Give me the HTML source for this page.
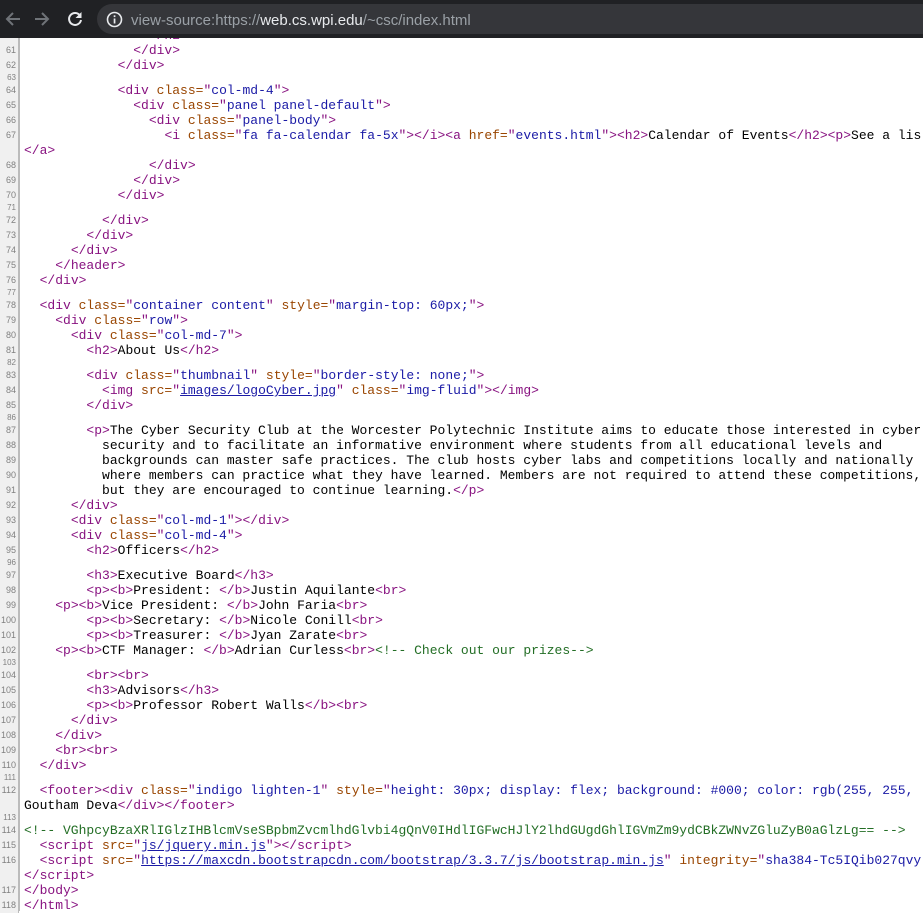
<!DOCTYPE html>
<html><head><meta charset="utf-8">
<style>
html,body{margin:0;padding:0;background:#fff;width:923px;height:911px;overflow:hidden;}
#bar{position:absolute;left:0;top:0;width:923px;height:38px;background:#202124;z-index:5;}
#pill{position:absolute;left:97px;top:4px;width:840px;height:30px;border-radius:15px;background:#35363a;}
#url{position:absolute;left:131px;top:12px;font:15px "Liberation Sans",sans-serif;color:#9aa0a6;white-space:pre;}
#url b{font-weight:normal;color:#e8eaed;}
#code{position:absolute;left:0;top:28px;width:923px;}
.r{display:flex;min-height:15px;}
.e{height:10px;min-height:10px;}
.n{flex:0 0 19px;width:19px;background:#f0f0f0;border-right:1px solid #bbb;font:9px "Liberation Sans",sans-serif;color:#808080;text-align:right;box-sizing:border-box;padding-right:2px;line-height:15px;}
.e .n{line-height:10px;font-size:8px;}
.x{padding-left:5px;font:13px/15px "Liberation Mono",monospace;white-space:pre;color:#000;overflow:hidden;}
.t{color:#881280}.a{color:#994500}.v{color:#1a1aa6}.c{color:#236e25}
.u{color:#1a1aa6;text-decoration:underline}
.fill{position:absolute;left:0;top:0;width:19px;height:911px;background:#f0f0f0;border-right:1px solid #bbb;}
</style></head><body>
<div class="fill"></div>
<div id="bar">
<svg style="position:absolute;left:4px;top:10px" width="18" height="18" viewBox="0 0 18 18"><path d="M16 9H3M9 3L3 9l6 6" stroke="#6f7378" stroke-width="2" fill="none"/></svg>
<svg style="position:absolute;left:33px;top:10px" width="18" height="18" viewBox="0 0 18 18"><path d="M2 9h13M9 3l6 6-6 6" stroke="#6f7378" stroke-width="2" fill="none"/></svg>
<svg style="position:absolute;left:66px;top:10px" width="18" height="18" viewBox="0 0 18 18"><path d="M14 5.5A6 6 0 1 0 15 10" stroke="#e8eaed" stroke-width="2" fill="none"/><path d="M15.5 2v6h-6z" fill="#e8eaed"/></svg>
<div id="pill"></div>
<svg style="position:absolute;left:106px;top:11px" width="17" height="17" viewBox="0 0 17 17"><circle cx="8.5" cy="8.5" r="7" stroke="#e8eaed" stroke-width="1.6" fill="none"/><rect x="7.7" y="7.5" width="1.7" height="5" fill="#e8eaed"/><rect x="7.7" y="4.3" width="1.7" height="1.8" fill="#e8eaed"/></svg>
<div id="url">view-source:https://<b>web.cs.wpi.edu</b>/~csc/index.html</div>
</div>
<div id="code">
<div class="r"><span class="n">60</span><span class="x">                <span class="t">&lt;/h2&gt;</span></span></div>
<div class="r"><span class="n">61</span><span class="x">              <span class="t">&lt;/div&gt;</span></span></div>
<div class="r"><span class="n">62</span><span class="x">            <span class="t">&lt;/div&gt;</span></span></div>
<div class="r e"><span class="n">63</span><span class="x"></span></div>
<div class="r"><span class="n">64</span><span class="x">            <span class="t">&lt;div <span class="a">class=</span>"<span class="v">col-md-4</span>"&gt;</span></span></div>
<div class="r"><span class="n">65</span><span class="x">              <span class="t">&lt;div <span class="a">class=</span>"<span class="v">panel panel-default</span>"&gt;</span></span></div>
<div class="r"><span class="n">66</span><span class="x">                <span class="t">&lt;div <span class="a">class=</span>"<span class="v">panel-body</span>"&gt;</span></span></div>
<div class="r"><span class="n">67</span><span class="x">                  <span class="t">&lt;i <span class="a">class=</span>"<span class="v">fa fa-calendar fa-5x</span>"&gt;&lt;/i&gt;&lt;a <span class="a">href=</span>"<span class="v">events.html</span>"&gt;&lt;h2&gt;</span>Calendar of Events<span class="t">&lt;/h2&gt;&lt;p&gt;</span>See a lis</span></div>
<div class="r"><span class="n"></span><span class="x"><span class="t">&lt;/a&gt;</span></span></div>
<div class="r"><span class="n">68</span><span class="x">                <span class="t">&lt;/div&gt;</span></span></div>
<div class="r"><span class="n">69</span><span class="x">              <span class="t">&lt;/div&gt;</span></span></div>
<div class="r"><span class="n">70</span><span class="x">            <span class="t">&lt;/div&gt;</span></span></div>
<div class="r e"><span class="n">71</span><span class="x"></span></div>
<div class="r"><span class="n">72</span><span class="x">          <span class="t">&lt;/div&gt;</span></span></div>
<div class="r"><span class="n">73</span><span class="x">        <span class="t">&lt;/div&gt;</span></span></div>
<div class="r"><span class="n">74</span><span class="x">      <span class="t">&lt;/div&gt;</span></span></div>
<div class="r"><span class="n">75</span><span class="x">    <span class="t">&lt;/header&gt;</span></span></div>
<div class="r"><span class="n">76</span><span class="x">  <span class="t">&lt;/div&gt;</span></span></div>
<div class="r e"><span class="n">77</span><span class="x"></span></div>
<div class="r"><span class="n">78</span><span class="x">  <span class="t">&lt;div <span class="a">class=</span>"<span class="v">container content</span>" <span class="a">style=</span>"<span class="v">margin-top: 60px;</span>"&gt;</span></span></div>
<div class="r"><span class="n">79</span><span class="x">    <span class="t">&lt;div <span class="a">class=</span>"<span class="v">row</span>"&gt;</span></span></div>
<div class="r"><span class="n">80</span><span class="x">      <span class="t">&lt;div <span class="a">class=</span>"<span class="v">col-md-7</span>"&gt;</span></span></div>
<div class="r"><span class="n">81</span><span class="x">        <span class="t">&lt;h2&gt;</span>About Us<span class="t">&lt;/h2&gt;</span></span></div>
<div class="r e"><span class="n">82</span><span class="x"></span></div>
<div class="r"><span class="n">83</span><span class="x">        <span class="t">&lt;div <span class="a">class=</span>"<span class="v">thumbnail</span>" <span class="a">style=</span>"<span class="v">border-style: none;</span>"&gt;</span></span></div>
<div class="r"><span class="n">84</span><span class="x">          <span class="t">&lt;img <span class="a">src=</span>"<span class="u">images/logoCyber.jpg</span>" <span class="a">class=</span>"<span class="v">img-fluid</span>"&gt;&lt;/img&gt;</span></span></div>
<div class="r"><span class="n">85</span><span class="x">        <span class="t">&lt;/div&gt;</span></span></div>
<div class="r e"><span class="n">86</span><span class="x"></span></div>
<div class="r"><span class="n">87</span><span class="x">        <span class="t">&lt;p&gt;</span>The Cyber Security Club at the Worcester Polytechnic Institute aims to educate those interested in cyber</span></div>
<div class="r"><span class="n">88</span><span class="x">          security and to facilitate an informative environment where students from all educational levels and</span></div>
<div class="r"><span class="n">89</span><span class="x">          backgrounds can master safe practices. The club hosts cyber labs and competitions locally and nationally</span></div>
<div class="r"><span class="n">90</span><span class="x">          where members can practice what they have learned. Members are not required to attend these competitions,</span></div>
<div class="r"><span class="n">91</span><span class="x">          but they are encouraged to continue learning.<span class="t">&lt;/p&gt;</span></span></div>
<div class="r"><span class="n">92</span><span class="x">      <span class="t">&lt;/div&gt;</span></span></div>
<div class="r"><span class="n">93</span><span class="x">      <span class="t">&lt;div <span class="a">class=</span>"<span class="v">col-md-1</span>"&gt;&lt;/div&gt;</span></span></div>
<div class="r"><span class="n">94</span><span class="x">      <span class="t">&lt;div <span class="a">class=</span>"<span class="v">col-md-4</span>"&gt;</span></span></div>
<div class="r"><span class="n">95</span><span class="x">        <span class="t">&lt;h2&gt;</span>Officers<span class="t">&lt;/h2&gt;</span></span></div>
<div class="r e"><span class="n">96</span><span class="x"></span></div>
<div class="r"><span class="n">97</span><span class="x">        <span class="t">&lt;h3&gt;</span>Executive Board<span class="t">&lt;/h3&gt;</span></span></div>
<div class="r"><span class="n">98</span><span class="x">        <span class="t">&lt;p&gt;&lt;b&gt;</span>President: <span class="t">&lt;/b&gt;</span>Justin Aquilante<span class="t">&lt;br&gt;</span></span></div>
<div class="r"><span class="n">99</span><span class="x">    <span class="t">&lt;p&gt;&lt;b&gt;</span>Vice President: <span class="t">&lt;/b&gt;</span>John Faria<span class="t">&lt;br&gt;</span></span></div>
<div class="r"><span class="n">100</span><span class="x">        <span class="t">&lt;p&gt;&lt;b&gt;</span>Secretary: <span class="t">&lt;/b&gt;</span>Nicole Conill<span class="t">&lt;br&gt;</span></span></div>
<div class="r"><span class="n">101</span><span class="x">        <span class="t">&lt;p&gt;&lt;b&gt;</span>Treasurer: <span class="t">&lt;/b&gt;</span>Jyan Zarate<span class="t">&lt;br&gt;</span></span></div>
<div class="r"><span class="n">102</span><span class="x">    <span class="t">&lt;p&gt;&lt;b&gt;</span>CTF Manager: <span class="t">&lt;/b&gt;</span>Adrian Curless<span class="t">&lt;br&gt;</span><span class="c">&lt;!-- Check out our prizes--&gt;</span></span></div>
<div class="r e"><span class="n">103</span><span class="x"></span></div>
<div class="r"><span class="n">104</span><span class="x">        <span class="t">&lt;br&gt;&lt;br&gt;</span></span></div>
<div class="r"><span class="n">105</span><span class="x">        <span class="t">&lt;h3&gt;</span>Advisors<span class="t">&lt;/h3&gt;</span></span></div>
<div class="r"><span class="n">106</span><span class="x">        <span class="t">&lt;p&gt;&lt;b&gt;</span>Professor Robert Walls<span class="t">&lt;/b&gt;&lt;br&gt;</span></span></div>
<div class="r"><span class="n">107</span><span class="x">      <span class="t">&lt;/div&gt;</span></span></div>
<div class="r"><span class="n">108</span><span class="x">    <span class="t">&lt;/div&gt;</span></span></div>
<div class="r"><span class="n">109</span><span class="x">    <span class="t">&lt;br&gt;&lt;br&gt;</span></span></div>
<div class="r"><span class="n">110</span><span class="x">  <span class="t">&lt;/div&gt;</span></span></div>
<div class="r e"><span class="n">111</span><span class="x"></span></div>
<div class="r"><span class="n">112</span><span class="x">  <span class="t">&lt;footer&gt;&lt;div <span class="a">class=</span>"<span class="v">indigo lighten-1</span>" <span class="a">style=</span>"<span class="v">height: 30px; display: flex; background: #000; color: rgb(255, 255,</span></span></span></div>
<div class="r"><span class="n"></span><span class="x">Goutham Deva<span class="t">&lt;/div&gt;&lt;/footer&gt;</span></span></div>
<div class="r e"><span class="n">113</span><span class="x"></span></div>
<div class="r"><span class="n">114</span><span class="x"><span class="c">&lt;!-- VGhpcyBzaXRlIGlzIHBlcmVseSBpbmZvcmlhdGlvbi4gQnV0IHdlIGFwcHJlY2lhdGUgdGhlIGVmZm9ydCBkZWNvZGluZyB0aGlzLg== --&gt;</span></span></div>
<div class="r"><span class="n">115</span><span class="x">  <span class="t">&lt;script <span class="a">src=</span>"<span class="u">js/jquery.min.js</span>"&gt;&lt;/script&gt;</span></span></div>
<div class="r"><span class="n">116</span><span class="x">  <span class="t">&lt;script <span class="a">src=</span>"<span class="u">https://maxcdn.bootstrapcdn.com/bootstrap/3.3.7/js/bootstrap.min.js</span>" <span class="a">integrity=</span>"<span class="v">sha384-Tc5IQib027qvy</span></span></span></div>
<div class="r"><span class="n"></span><span class="x"><span class="t">&lt;/script&gt;</span></span></div>
<div class="r"><span class="n">117</span><span class="x"><span class="t">&lt;/body&gt;</span></span></div>
<div class="r"><span class="n">118</span><span class="x"><span class="t">&lt;/html&gt;</span></span></div>
</div>
</body></html>
